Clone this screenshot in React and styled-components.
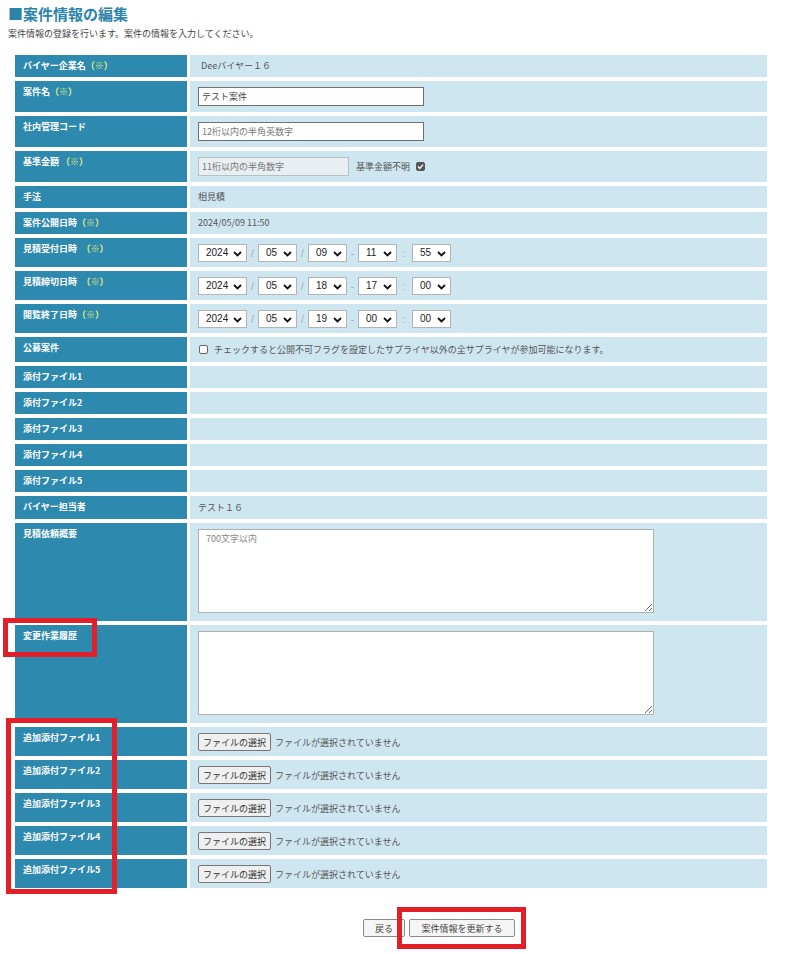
import React from 'react';
import styled, { createGlobalStyle } from 'styled-components';

const GlobalStyle = createGlobalStyle`
  body {
    margin: 0;
    background: #fff;
    font-family: "Noto Sans CJK JP", "Noto Sans", sans-serif;
    color: #555;
  }
`;

const dateRows = [
  { label: '見積受付日時', gap: true, values: ['2024', '05', '09', '11', '55'] },
  { label: '見積締切日時', gap: true, values: ['2024', '05', '18', '17', '00'] },
  { label: '閲覧終了日時', gap: false, values: ['2024', '05', '19', '00', '00'] },
];

const Chevron = () => (
  <svg width="9" height="6" viewBox="0 0 9 6">
    <path d="M1 1 L4.5 4.5 L8 1" fill="none" stroke="#111" strokeWidth="1.8" />
  </svg>
);

const Select = ({ value, width }) => (
  <SelectWrap style={{ width }}>
    <SelectField defaultValue={value}>
      <option>{value}</option>
    </SelectField>
    <ChevronSpot><Chevron /></ChevronSpot>
  </SelectWrap>
);

const DateSelects = ({ values }) => (
  <Inline>
    <Select value={values[0]} width={49} />
    <Sep>/</Sep>
    <Select value={values[1]} width={39} />
    <Sep>/</Sep>
    <Select value={values[2]} width={39} />
    <Sep>-</Sep>
    <Select value={values[3]} width={39} />
    <Sep $wide>:</Sep>
    <Select value={values[4]} width={39} />
  </Inline>
);

const FilePicker = () => (
  <Inline>
    <FileButton>ファイルの選択</FileButton>
    <FileNote>ファイルが選択されていません</FileNote>
  </Inline>
);

const Label = ({ children, req, gap }) => (
  <LabelCell>
    {children}
    {gap && '\u3000'}
    {req && <Req>（※）</Req>}
  </LabelCell>
);

const App = () => {
  return (
    <Page>
      <GlobalStyle />
      <Title>■案件情報の編集</Title>
      <Lead>案件情報の登録を行います。案件の情報を入力してください。</Lead>

      <FormGrid>
        <Label req>バイヤー企業名</Label>
        <ValueCell><TextValue $indent>Deeバイヤー１６</TextValue></ValueCell>

        <Label req>案件名</Label>
        <ValueCell $pad="6px 8px"><TextInput defaultValue="テスト案件" /></ValueCell>

        <Label>社内管理コード</Label>
        <ValueCell $pad="6px 8px"><TextInput placeholder="12桁以内の半角英数字" /></ValueCell>

        <Label req>基準金額 </Label>
        <ValueCell $pad="6px 8px">
          <Inline>
            <TextInput disabled $width={151} placeholder="11桁以内の半角数字" />
            <CheckText>基準金額不明</CheckText>
            <FakeCheck $checked>
              <svg width="7" height="7" viewBox="0 0 7 7">
                <path d="M1 3.6 L2.8 5.4 L6 1.6" fill="none" stroke="#fff" strokeWidth="1.4" />
              </svg>
            </FakeCheck>
          </Inline>
        </ValueCell>

        <Label>手法</Label>
        <ValueCell><TextValue>相見積</TextValue></ValueCell>

        <Label req>案件公開日時</Label>
        <ValueCell><TextValue>2024/05/09 11:50</TextValue></ValueCell>

        {dateRows.map(row => (
          <React.Fragment key={row.label}>
            <Label req gap={row.gap}>{row.label}</Label>
            <ValueCell $pad="6px 8px 5px 8px"><DateSelects values={row.values} /></ValueCell>
          </React.Fragment>
        ))}

        <Label>公募案件</Label>
        <ValueCell $pad="6px 8px">
          <Inline>
            <FakeCheck />
            <CheckNote>チェックすると公開不可フラグを設定したサプライヤ以外の全サプライヤが参加可能になります。</CheckNote>
          </Inline>
        </ValueCell>

        {[1, 2, 3, 4, 5].map(n => (
          <React.Fragment key={n}>
            <Label>添付ファイル{n}</Label>
            <ValueCell><TextValue>&nbsp;</TextValue></ValueCell>
          </React.Fragment>
        ))}

        <Label>バイヤー担当者</Label>
        <ValueCell $pad="6px 8px 5px 8px"><TextValue>テスト１６</TextValue></ValueCell>

        <Label>見積依頼概要</Label>
        <ValueCell $pad="6px 8px 8px 8px"><TextArea placeholder="700文字以内" /></ValueCell>

        <Label>変更作業履歴</Label>
        <ValueCell $pad="6px 8px 8px 8px"><TextArea /></ValueCell>

        {[1, 2, 3, 4, 5].map(n => (
          <React.Fragment key={n}>
            <Label>追加添付ファイル{n}</Label>
            <ValueCell $pad="6px 8px 5px 8px"><FilePicker /></ValueCell>
          </React.Fragment>
        ))}
      </FormGrid>

      <Actions>
        <ActionButton $width={42}>戻る</ActionButton>
        <ActionButton $width={106}>案件情報を更新する</ActionButton>
      </Actions>

      <Marker style={{ left: 3, top: 618, width: 94, height: 39 }} />
      <Marker style={{ left: 6, top: 718, width: 111, height: 176 }} />
      <Marker style={{ left: 397, top: 907, width: 129, height: 42 }} />
    </Page>
  );
};

const Page = styled.div`
  position: relative;
  padding: 6px 8px 20px;
  min-height: 954px;
  box-sizing: border-box;
`;

const Title = styled.h1`
  margin: 0;
  font-size: 15px;
  line-height: 15px;
  font-weight: 600;
  color: #2d84aa;
`;

const Lead = styled.p`
  margin: 7px 0 0;
  font-size: 9px;
  line-height: 12px;
  color: #444;
`;

const FormGrid = styled.div`
  display: grid;
  grid-template-columns: 172px 577px;
  column-gap: 3px;
  row-gap: 4px;
  margin: 15px 0 0 7px;
`;

const LabelCell = styled.div`
  background: #2d89ae;
  color: #fff;
  font-size: 9px;
  line-height: 12px;
  font-weight: bold;
  padding: 5px 8px;
`;

const Req = styled.span`
  color: #e4ef7e;
`;

const ValueCell = styled.div`
  background: #cee6f0;
  padding: ${p => p.$pad || '5px 8px'};
  display: flex;
  align-items: flex-start;
`;

const TextValue = styled.span`
  font-size: 9px;
  line-height: 12px;
  color: #555;
  padding-left: ${p => (p.$indent ? '3px' : '0')};
`;

const Inline = styled.div`
  display: flex;
  align-items: center;
`;

const TextInput = styled.input`
  box-sizing: border-box;
  width: ${p => p.$width || 226}px;
  height: 19px;
  margin: 0;
  padding: 0 3px;
  border: 1px solid ${p => (p.disabled ? '#b8c0c4' : '#707070')};
  background: ${p => (p.disabled ? '#e8eef1' : '#fff')};
  font-family: "Noto Sans CJK JP", sans-serif;
  font-size: 9px;
  color: #444;

  &::placeholder {
    color: #777;
  }
`;

const CheckText = styled.span`
  font-size: 9px;
  color: #555;
  margin: 0 6px 0 7px;
`;

const FakeCheck = styled.span`
  box-sizing: border-box;
  width: 9px;
  height: 9px;
  border-radius: 2px;
  display: inline-flex;
  align-items: center;
  justify-content: center;
  background: ${p => (p.$checked ? '#555' : '#fff')};
  border: 1px solid ${p => (p.$checked ? '#555' : '#666')};
  margin-left: ${p => (p.$checked ? '0' : '1px')};
`;

const CheckNote = styled.span`
  font-size: 9px;
  line-height: 13px;
  color: #555;
  margin-left: 6px;
`;

const SelectWrap = styled.span`
  position: relative;
  display: flex;
  height: 18px;
`;

const SelectField = styled.select`
  appearance: none;
  display: block;
  box-sizing: border-box;
  width: 100%;
  height: 18px;
  margin: 0;
  padding: 0 0 0 7px;
  border: 1px solid #b4b4b4;
  border-radius: 0;
  background: #fff;
  font-family: "Liberation Sans", Arial, sans-serif;
  font-size: 10px;
  line-height: 16px;
  color: #222;
`;

const ChevronSpot = styled.span`
  position: absolute;
  right: 5px;
  top: 6px;
  line-height: 0;
  pointer-events: none;
`;

const Sep = styled.span`
  width: ${p => (p.$wide ? 15 : 11)}px;
  text-align: center;
  font-family: "Liberation Sans", Arial, sans-serif;
  font-size: 10px;
  color: #aaa;
`;

const TextArea = styled.textarea`
  box-sizing: border-box;
  width: 456px;
  height: 84px;
  margin: 0;
  padding: 3px 7px;
  border: 1px solid #b0b0b0;
  font-family: "Noto Sans CJK JP", sans-serif;
  font-size: 9px;
  line-height: 12px;
  color: #444;

  &::placeholder {
    color: #888;
  }
`;

const FileButton = styled.span`
  box-sizing: border-box;
  height: 18px;
  width: 73px;
  display: inline-flex;
  align-items: center;
  justify-content: center;
  border: 1px solid #767676;
  border-radius: 2px;
  background: #efefef;
  font-size: 9px;
  color: #333;
`;

const FileNote = styled.span`
  margin-left: 4px;
  font-size: 9px;
  color: #555;
`;

const Actions = styled.div`
  display: flex;
  gap: 4px;
  padding-left: 355px;
  margin-top: 31px;
`;

const ActionButton = styled.button`
  box-sizing: border-box;
  width: ${p => p.$width}px;
  height: 18px;
  padding: 0;
  border: 1px solid #8a8a8a;
  border-radius: 2px;
  background: #f5f5f5;
  font-family: "Noto Sans CJK JP", sans-serif;
  font-size: 9px;
  color: #444;
`;

const Marker = styled.div`
  position: absolute;
  box-sizing: border-box;
  border: 5px solid #e3202a;
  pointer-events: none;
`;

export default App;
